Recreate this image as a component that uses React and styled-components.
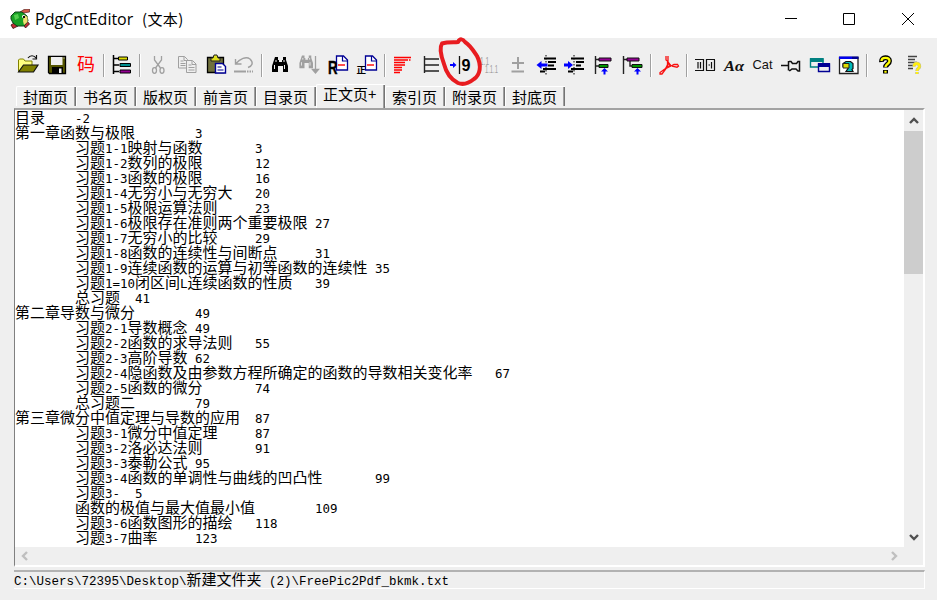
import React from 'react';
import styled, { createGlobalStyle, css } from 'styled-components';

const Global = createGlobalStyle`
  * { box-sizing: border-box; }
  html, body { margin: 0; padding: 0; overflow: hidden; }
`;

const cjk = '"Noto Sans CJK SC", sans-serif';

const Window = styled.div`
  position: relative;
  display: flex;
  flex-direction: column;
  width: 937px;
  height: 600px;
  background: #efefef;
  color: #000;
  font-family: ${cjk};
`;

const TitleBar = styled.header`
  display: flex;
  align-items: center;
  height: 38px;
  padding-left: 10px;
  background: #fff;
`;

const AppName = styled.span`
  margin-left: 5px;
  width: 107px;
  font: 16px/36px "Open Sans", sans-serif;
  white-space: nowrap;
`;

const Mode = styled.span`
  flex: 1;
  font: 15px/36px ${cjk};
  letter-spacing: 0.4px;
`;

const WindowButton = styled.button`
  display: flex;
  align-items: center;
  justify-content: center;
  width: 58.5px;
  height: 38px;
  padding: 0;
  border: 0;
  background: none;
`;

const Toolbar = styled.div`
  display: flex;
  align-items: center;
  height: 46px;
  padding: 8px 0 0 14px;
`;

const Tool = styled.button`
  display: flex;
  align-items: center;
  justify-content: center;
  flex: none;
  width: 28.8px;
  height: 24px;
  padding: 0;
  border: 0;
  background: none;
`;

const Divider = styled.i`
  flex: none;
  width: 2px;
  height: 23px;
  margin: 0 2.6px;
  border-left: 1px solid #a0a0a0;
  border-right: 1px solid #fff;
`;

const TabRow = styled.nav`
  display: flex;
  align-items: flex-end;
  height: 24px;
  padding-left: 16px;
`;

const Tab = styled.button`
  flex: none;
  width: 60px;
  height: 20px;
  margin-bottom: 2px;
  padding: 0 0 0 6px;
  border: 0;
  border-top: 1px solid #fff;
  border-left: 1px solid #fff;
  border-radius: 2px 0 0 0;
  box-shadow: inset -1px 0 #747474, inset -2px 0 #a0a0a0;
  background: none;
  color: #000;
  font: 15px/18px ${cjk};
  text-align: left;
  white-space: nowrap;
  ${p => p.$active && css`
    width: 69px;
    height: 24px;
    margin-bottom: 0;
    padding-bottom: 6px;
  `}
`;

const Page = styled.main`
  display: grid;
  grid-template: 437px 18px / 889px 19px;
  width: 911px;
  height: 459px;
  margin-left: 14px;
  border-left: 1px solid #808080;
  border-top: 2px solid #a3a3a3;
  border-bottom: 2px solid #fff;
  border-right: 2px solid #fff;
`;

const Editor = styled.section`
  overflow: hidden;
  background: #fff;
`;

const Line = styled.div`
  position: relative;
  top: -1px;
  height: 15px;
  font: 15px/15px ${cjk};
  white-space: pre;
  tab-size: 60px;
`;

const Half = styled.span`
  font-family: ${p => (p.$serif ? '"Liberation Mono"' : '"DejaVu Sans Mono"')}, monospace;
  font-size: ${p => (p.$serif ? 12.5 : 12.46)}px;
  line-height: 1px;
`;

const VScroll = styled.div`
  display: flex;
  flex-direction: column;
  align-items: center;
  justify-content: space-between;
`;

const Thumb = styled.div`
  width: 19px;
  height: 143px;
  margin-bottom: auto;
  background: #cdcdcd;
`;

const HScroll = styled.div`
  display: flex;
  align-items: center;
  justify-content: space-between;
`;

const ArrowBox = styled.span`
  display: flex;
  align-items: center;
  justify-content: center;
  width: 20px;
  height: 21px;
`;

const Status = styled.footer`
  width: 911px;
  height: 19px;
  margin: 3px 0 0 14px;
  border-top: 2px solid #b2b2b2;
  border-right: 1px solid #fff;
  border-bottom: 1px solid #fff;
`;

const MarkLayer = styled.svg`
  position: absolute;
  left: 434px;
  top: 34px;
  pointer-events: none;
`;

const Mixed = ({ text, serif }) =>
  text.split(/([\x20-\x7e]+)/).map((part, i) => (i % 2 ? <Half key={i} $serif={serif}>{part}</Half> : part));

const Icon = ({ children }) => (
  <svg width="24" height="24" viewBox="0 0 24 24" fill="none">{children}</svg>
);

const Chevron = ({ dir, color }) => {
  const d = {
    up: 'M2 8l4-4 4 4', down: 'M2 4l4 4 4-4', left: 'M8 2L4 6l4 4', right: 'M4 2l4 4-4 4',
  }[dir];
  return (
    <ArrowBox>
      <svg width="12" height="12" fill="none"><path d={d} stroke={color} strokeWidth="2.4" /></svg>
    </ArrowBox>
  );
};

const Binoculars = ({ color }) => (
  <g fill={color}>
    <path d="M7 4h3v3h1v2h3V7h1V4h3v3l2 6v6h-5v-6h-5v6H4v-6l2-6z" />
    <path d="M8 7v2M16 7v2M6.500 12v4M16.500 12v4" stroke="#efefef" />
  </g>
);

const BluePage = () => (
  <g>
    <path d="M10.500 3h7l4 4V17h-11z" fill="#fff" stroke="#000094" strokeWidth="1.300" />
    <path d="M16.500 3v5H21" stroke="#000094" strokeWidth="1.200" />
    <path d="M12 12h7" stroke="red" strokeWidth="1.400" />
  </g>
);

const sans = '"Liberation Sans", sans-serif';

const icons = {
  open: (
    <g>
      <path d="M2.500 19V7l1-1h4l1.500 2h7v4" fill="#ffff80" stroke="#808000" />
      <path d="M2.500 19l5-7H22l-4.500 7z" fill="#808000" stroke="#111" strokeWidth="1.200" />
      <path d="M12 5c2-3 6-3 8 0M20.500 2v4h-4" stroke="#111" strokeWidth="1.200" />
    </g>
  ),
  save: (
    <g>
      <path d="M3.500 3.500h17v17h-16l-1-1z" fill="#555500" stroke="#000" strokeWidth="1.300" />
      <path d="M6 4h11.500v8H6z" fill="#efefef" />
      <path d="M7 14h11v6H7z" fill="#000" /><path d="M14 15.500h2.500V20H14z" fill="#efefef" />
      <path d="M18.500 4.500h1v1h-1z" fill="#fff" />
    </g>
  ),
  code: <text x="3" y="18" fontFamily={cjk} fontSize="18" fill="#f00">码</text>,
  tree: (
    <g>
      <path d="M3.500 2v19M3 5.500h5M3 12h6M3 18.500h6" stroke="#000" strokeWidth="1.500" />
      <path d="M8.500 4h9v3h-9z" fill="#dede00" stroke="#000" />
      <path d="M10 10.500h10.500v3H10z" fill="#008c8c" stroke="#000" />
      <path d="M10 17h10.500v3H10z" fill="#940094" stroke="#000" />
    </g>
  ),
  cut: (
    <g stroke="#a0a0a0" strokeWidth="1.300">
      <path d="M8.500 3v4l6 8M15.500 3v4l-6 8" /><ellipse cx="8.500" cy="17.500" rx="2" ry="2.800" /><ellipse cx="16" cy="17.500" rx="2" ry="2.800" />
    </g>
  ),
  copy: (
    <g stroke="#a0a0a0">
      <path d="M3.500 3.500h6l3 3V15h-9zM9 3.500v4h4" /><path d="M5.500 8h3M5.500 10.500h5M5.500 12.500h5" />
      <path d="M11.500 7.500h6l3.500 3.500v8.500h-9.500z" fill="#efefef" /><path d="M17 8v3.500h4M13.500 12h3M13.500 14.500h6M13.500 17h6" />
    </g>
  ),
  paste: (
    <g>
      <path d="M3.500 4.500h16v15h-16z" fill="#70703c" stroke="#000" strokeWidth="1.300" />
      <path d="M7 8V5h2l1-3h3l1 3h2v3z" fill="#dede20" stroke="#222" />
      <path d="M11.500 10.500h7l3 3V20h-10z" fill="#fff" stroke="#000094" strokeWidth="1.400" />
      <path d="M13.500 14h4M13.500 17h6" stroke="#000094" />
    </g>
  ),
  undo: (
    <g stroke="#a0a0a0" strokeWidth="1.400">
      <path d="M3.500 6v5h6M4 10.500C8 6 14 3 18 6c4 4 2 7-2 8.500" /><path d="M2 18.500h12" strokeWidth="2" />
      <path d="M15 18.500h6" strokeWidth="2" strokeDasharray="1.500 1" />
    </g>
  ),
  find: <Binoculars color="#000" />,
  findNext: (
    <g><g transform="translate(-1 -1) scale(.85)"><Binoculars color="#a0a0a0" /></g>
      <path d="M18.500 3v15M15.500 16.500l3 3.500 3-3.500z" fill="#a0a0a0" stroke="#a0a0a0" strokeWidth="1.300" /></g>
  ),
  replace: (
    <g><BluePage /><text x="2" y="20.500" fontFamily={sans} fontSize="17.500" fontWeight="700" fill="#000" stroke="#000" strokeWidth=".4" textLength="9.500" lengthAdjust="spacingAndGlyphs">R</text></g>
  ),
  body: (
    <g><BluePage /><text x="1.500" y="20" fontFamily={cjk} fontSize="9.500" fontWeight="700" fill="#000">正</text></g>
  ),
  redLines: (
    <path d="M3 4.500h17M3 7h14M18 7h1.500M3 9.500h11M3 12h11M3 14.500h8M3 17h8M3 19.500h6" stroke="red" strokeWidth="1.500" />
  ),
  level: <path d="M4.500 3v17M4.500 6H19M4.500 12H19M4.500 18H19" stroke="#222" strokeWidth="1.400" />,
  nine: (
    <g>
      <path d="M2 11h3V9l3.500 3L5 15v-2H2z" fill="#00f" />
      <path d="M11.500 3v18" stroke="#111" strokeWidth="1.300" />
      <text x="13.500" y="18" fontFamily={sans} fontSize="17" fontWeight="700" fill="#000" textLength="9" lengthAdjust="spacingAndGlyphs">9</text>
    </g>
  ),
  numbers: (
    <g fontFamily={sans} fontSize="10" fill="#a0a0a0">
      <text x="3" y="12" textLength="9" lengthAdjust="spacingAndGlyphs">1.1</text>
      <text x="8" y="20" textLength="13" lengthAdjust="spacingAndGlyphs">1.1.1</text>
    </g>
  ),
  plus: <path d="M12 4v12M6 10h12M5.500 18.500H18" stroke="#a0a0a0" strokeWidth="2" />,
  outdent: (
    <g><path d="M9 5.500h12M13 9h8M13 12.500h6M8 16h13M5 18.500h5" stroke="#000" strokeWidth="1.800" />
      <path d="M11 2v20" stroke="#000" strokeDasharray="1.500 1.500" /><path d="M1.500 12l5-4v2.500h6v3h-6V16z" fill="#00f" /></g>
  ),
  indent: (
    <g><path d="M8 5.500h13M13 9h8M13 12.500h5M8 16h13M5 18.500h5" stroke="#000" strokeWidth="1.800" />
      <path d="M11 2v20" stroke="#000" strokeDasharray="1.500 1.500" /><path d="M10 12L5 8v2.500H1v3h4V16z" fill="#00f" /></g>
  ),
  sibling: (
    <g><path d="M3.500 3v18M3 6.500h4M3 13h4" stroke="#222" strokeWidth="1.400" />
      <path d="M7 5h12v3H7z" fill="#940094" stroke="#111" /><path d="M7 11.500h9v3H7z" fill="#009400" stroke="#111" />
      <path d="M12.500 15l3.500 3.500h-2.500V21.500h-2v-3H9z" fill="#00f" /></g>
  ),
  child: (
    <g><path d="M2.500 3v18M2 6.500h4M9 8v5h3" stroke="#222" strokeWidth="1.400" />
      <path d="M6 5h12v3H6z" fill="#940094" stroke="#111" /><path d="M11 11.500h10v3H11z" fill="#009400" stroke="#111" />
      <path d="M16.500 15l3.500 3.500h-2.500V21.500h-2v-3H13z" fill="#00f" /></g>
  ),
  pdf: (
    <g stroke="#f81010" strokeWidth="1.300">
      <path d="M9 3v4l2 1.500V3M10.500 8l.5 3-2.500 4.500L3 19.500v1.500h2l4-5.500 5-2.500M11 9l3 4 3-1.500h3.500l1 1.500-1.500 1.200-5-1" />
      <path d="M10.500 10v3.500l3-1z" />
    </g>
  ),
  columns: (
    <path d="M2 6.500h8.500v11H2M5 9v6.500M7.500 9v6.500M22 6.500h-8.500v11H22M21.500 7v10M18.500 9v6.500M15.500 12h1.500" stroke="#111" strokeWidth="1.200" />
  ),
  font: <text x="2" y="17.500" fontFamily='"Liberation Serif", serif' fontSize="15.500" fontWeight="700" fontStyle="italic" fill="#111" textLength="20" lengthAdjust="spacingAndGlyphs">Aα</text>,
  cat: <text x="1.500" y="16" fontFamily={sans} fontSize="13.500" fill="#111" textLength="20" lengthAdjust="spacingAndGlyphs">Cat</text>,
  pin: (
    <path d="M2 12.500h7M9.500 8v9.500M10 8.500h2l1.500 2h4l1.500-2h1.500v9.500h-1.500l-2-2h-4l-2 1.500h-1" stroke="#111" strokeWidth="1.500" />
  ),
  windows: (
    <g><path d="M2.500 6h12.500v8H2.500z" fill="#efefef" stroke="#008080" strokeWidth="1.400" /><path d="M2 5h13.500v4H2z" fill="#008080" />
      <path d="M10.500 11h11v7.500h-11z" fill="#efefef" stroke="#000094" strokeWidth="1.400" /><path d="M10 10h12v4H10z" fill="#000094" /></g>
  ),
  preview: (
    <g><path d="M2.500 4.500h18.500v16H2.500z" fill="#fff" stroke="#222" strokeWidth="1.300" /><path d="M2 3.500h13V6H2z" fill="#00e" /><path d="M15 3.500h6.500V6H15z" fill="#000094" />
      <path d="M9 8.500h4.500l2.500 2v5l-1 1 1 2H9l2-3v-2H6v-3z" fill="#00bcbc" stroke="#111" strokeWidth="1.200" /><path d="M6 10.500h6v4.500H6z" fill="#dede00" stroke="#222" /></g>
  ),
  help: (
    <g><path d="M8.500 9C8 3.500 16.500 3.500 16.500 8c0 3-4 3-4 6.500M12.500 17v3.500" stroke="#000" strokeWidth="5" />
      <path d="M8.500 8C8.500 3.800 16.500 3.800 16.500 8c0 3-4 3-4 6M12.500 17.800v2" stroke="#ffff00" strokeWidth="2.300" /></g>
  ),
  listHelp: (
    <g><path d="M6 3.500h9M6 6.500h7M6 9.500h9M6 12.500h5M6 15.500h5" stroke="#444" strokeWidth="1.400" />
      <path d="M12 13.500c0-4 5.500-4 5.500 0 0 2-2.500 1.500-2.500 4.500M15 19v2" stroke="#b8b8a0" strokeWidth="3.400" />
      <path d="M12 13.500c0-4 5.500-4 5.500 0 0 2-2.500 1.500-2.500 4.500M15 19v2" stroke="#ffee10" strokeWidth="2.400" /></g>
  ),
};

const toolbar = [
  'open', 'save', 'code', '|', 'tree', '|', 'cut', 'copy', 'paste', 'undo', '|',
  'find', 'findNext', 'replace', 'body', '|',
  'redLines', 'level', 'nine', 'numbers', 'plus', 'outdent', 'indent', 'sibling', 'child', '|',
  'pdf', '|', 'columns', 'font', 'cat', 'pin', 'windows', 'preview', '|', 'help', 'listHelp',
];

const tabs = ['封面页', '书名页', '版权页', '前言页', '目录页', '正文页+', '索引页', '附录页', '封底页'];

const lines = [
  '目录\t-2',
  '第一章函数与极限\t3',
  '\t习题1-1映射与函数\t3',
  '\t习题1-2数列的极限\t12',
  '\t习题1-3函数的极限\t16',
  '\t习题1-4无穷小与无穷大\t20',
  '\t习题1-5极限运算法则\t23',
  '\t习题1-6极限存在准则两个重要极限\t27',
  '\t习题1-7无穷小的比较\t29',
  '\t习题1-8函数的连续性与间断点\t31',
  '\t习题1-9连续函数的运算与初等函数的连续性\t35',
  '\t习题1=10闭区间L连续函数的性质\t39',
  '\t总习题\t41',
  '第二章导数与微分\t49',
  '\t习题2-1导数概念\t49',
  '\t习题2-2函数的求导法则\t55',
  '\t习题2-3高阶导数\t62',
  '\t习题2-4隐函数及由参数方程所确定的函数的导数相关变化率\t67',
  '\t习题2-5函数的微分\t74',
  '\t总习题二\t79',
  '第三章微分中值定理与导数的应用\t87',
  '\t习题3-1微分中值定理\t87',
  '\t习题3-2洛必达法则\t91',
  '\t习题3-3泰勒公式\t95',
  '\t习题3-4函数的单调性与曲线的凹凸性\t99',
  '\t习题3-\t5',
  '\t函数的极值与最大值最小值\t109',
  '\t习题3-6函数图形的描绘\t118',
  '\t习题3-7曲率\t123',
];

const Logo = () => (
  <svg width="20" height="20" viewBox="0 0 20 20">
    <path d="M10 3l4-2.500 5.500-.5v3l-6 1z" fill="#d65a48" stroke="#401010" strokeWidth=".6" />
    <path d="M1 16l3-2 4 3-5 2.500zM13 15l4-3 2.500 3-4 4z" fill="#c42d35" stroke="#301010" strokeWidth=".8" />
    <path d="M1 7l4-4h7l5 4 1 5-4 5H7l-4-3-2-4z" fill="#18a025" stroke="#10401a" />
    <path d="M14 6l3.500 2v5L14 16l-1-4z" fill="#f3df73" /><path d="M4 6l4-1 1 4-4 2z" fill="#55cf50" />
    <circle cx="13.500" cy="7.500" r="1.500" fill="#fff" /><path d="M13 7h2v2h-2z" fill="#111" />
  </svg>
);

export default function App() {
  return (
    <Window>
      <Global />
      <TitleBar>
        <Logo />
        <AppName>PdgCntEditor</AppName>
        <Mode>(文本)</Mode>
        <WindowButton aria-label="Minimize"><svg width="12" height="12"><path d="M0 5.500h12" stroke="#000" /></svg></WindowButton>
        <WindowButton aria-label="Maximize"><svg width="12" height="12"><path d="M.5.5h11v11H.5z" fill="none" stroke="#000" /></svg></WindowButton>
        <WindowButton aria-label="Close"><svg width="12" height="12"><path d="M0 0l12 12M12 0L0 12" stroke="#000" /></svg></WindowButton>
      </TitleBar>
      <Toolbar>
        {toolbar.map((name, i) => (name === '|' ? <Divider key={i} /> : <Tool key={i}><Icon>{icons[name]}</Icon></Tool>))}
      </Toolbar>
      <TabRow>
        {tabs.map(t => <Tab key={t} $active={t === '正文页+'}>{t}</Tab>)}
      </TabRow>
      <Page>
        <Editor>{lines.map((l, i) => <Line key={i}><Mixed text={l} /></Line>)}</Editor>
        <VScroll>
          <Chevron dir="up" color="#505050" />
          <Thumb />
          <Chevron dir="down" color="#505050" />
        </VScroll>
        <HScroll>
          <Chevron dir="left" color="#bfbfbf" />
          <Chevron dir="right" color="#bfbfbf" />
        </HScroll>
      </Page>
      <Status><Line><Mixed serif text={'C:\\Users\\72395\\Desktop\\新建文件夹 (2)\\FreePic2Pdf_bkmk.txt'} /></Line></Status>
      <MarkLayer width="52" height="56" fill="none">
        <path d="M8 9.500C14 7.500 20 8.500 24 8c2-4 5-3 7 0 5 3 8 8 12 14 5 10 3 19-3 23-5 4-11 6-16 4-8-4-12-11-14-19C7 22 5 14 8 9.500z" stroke="#e81c20" strokeWidth="4" strokeLinejoin="round" />
      </MarkLayer>
    </Window>
  );
}
